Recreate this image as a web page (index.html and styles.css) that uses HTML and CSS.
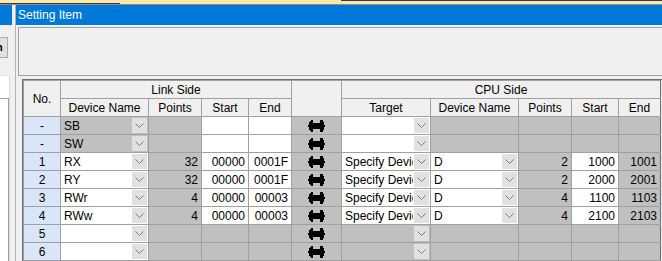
FILE: index.html
```html
<!DOCTYPE html>
<html lang="en">
<head>
    <meta charset="UTF-8">
    <title>Setting Item</title>
    <link rel="stylesheet" href="styles.css">
</head>
<body>
    <svg class="defs" width="0" height="0">
        <symbol id="chev" viewBox="0 0 9 5"><polyline points="0.5,0.5 4.5,4.5 8.5,0.5" fill="none" stroke="#7c7c7c" stroke-width="1"/></symbol>
        <symbol id="dbl" viewBox="0 0 17 12"><polygon points="0,6 2,1 3,0 5,0 5,3 12,3 12,0 14,0 15,1 17,6 15,11 14,12 12,12 12,9 5,9 5,12 3,12 2,11" fill="#000"/></symbol>
    </svg>

    <div class="topbar">
        <div class="tb-left"></div>
        <div class="tb-mid"></div>
        <div class="tb-right"></div>
    </div>

    <div class="workspace">
        <div class="side">
            <div class="side-title"></div>
            <div class="side-btn"><b>n</b></div>
            <div class="side-list"><div class="side-inner"></div></div>
        </div>
        <div class="splitter"></div>

        <div class="main">
            <div class="title">Setting Item</div>
            <div class="content">
                <div class="toolbar"></div>
                <div class="grid-wrap">
                    <table class="grid">
                        <colgroup>
                            <col style="width:37px"><col style="width:88px"><col style="width:53px"><col style="width:47px"><col style="width:43px">
                            <col style="width:50px">
                            <col style="width:89px"><col style="width:88px"><col style="width:53px"><col style="width:47px"><col style="width:42px">
                        </colgroup>
                        <tr>
                            <th rowspan="2">No.</th>
                            <th colspan="4">Link Side</th>
                            <th rowspan="2"></th>
                            <th colspan="5" class="last">CPU Side</th>
                        </tr>
                        <tr>
                            <th>Device Name</th><th>Points</th><th>Start</th><th>End</th>
                            <th>Target</th><th>Device Name</th><th>Points</th><th>Start</th><th class="last">End</th>
                        </tr>

                        <tr>
                            <td class="no">-</td>
                            <td class="combo g"><div class="cb"><span class="cb-text">SB</span><span class="cb-btn"><svg><use href="#chev"/></svg></span></div></td>
                            <td class="g"></td><td class="w"></td><td class="w"></td>
                            <td class="g arrow"><svg><use href="#dbl"/></svg></td>
                            <td class="combo w"><div class="cb"><span class="cb-text"></span><span class="cb-btn"><svg><use href="#chev"/></svg></span></div></td>
                            <td class="g"></td><td class="g"></td><td class="g"></td><td class="g last"></td>
                        </tr>
                        <tr>
                            <td class="no">-</td>
                            <td class="combo g"><div class="cb"><span class="cb-text">SW</span><span class="cb-btn"><svg><use href="#chev"/></svg></span></div></td>
                            <td class="g"></td><td class="w"></td><td class="w"></td>
                            <td class="g arrow"><svg><use href="#dbl"/></svg></td>
                            <td class="combo w"><div class="cb"><span class="cb-text"></span><span class="cb-btn"><svg><use href="#chev"/></svg></span></div></td>
                            <td class="g"></td><td class="g"></td><td class="g"></td><td class="g last"></td>
                        </tr>
                        <tr>
                            <td class="no">1</td>
                            <td class="combo w"><div class="cb"><span class="cb-text">RX</span><span class="cb-btn"><svg><use href="#chev"/></svg></span></div></td>
                            <td class="g num">32</td><td class="w num">00000</td><td class="w num">0001F</td>
                            <td class="g arrow"><svg><use href="#dbl"/></svg></td>
                            <td class="combo w"><div class="cb"><span class="cb-text">Specify Device</span><span class="cb-btn"><svg><use href="#chev"/></svg></span></div></td>
                            <td class="combo w"><div class="cb"><span class="cb-text">D</span><span class="cb-btn"><svg><use href="#chev"/></svg></span></div></td>
                            <td class="g num">2</td><td class="w num">1000</td><td class="g num last">1001</td>
                        </tr>
                        <tr>
                            <td class="no">2</td>
                            <td class="combo w"><div class="cb"><span class="cb-text">RY</span><span class="cb-btn"><svg><use href="#chev"/></svg></span></div></td>
                            <td class="g num">32</td><td class="w num">00000</td><td class="w num">0001F</td>
                            <td class="g arrow"><svg><use href="#dbl"/></svg></td>
                            <td class="combo w"><div class="cb"><span class="cb-text">Specify Device</span><span class="cb-btn"><svg><use href="#chev"/></svg></span></div></td>
                            <td class="combo w"><div class="cb"><span class="cb-text">D</span><span class="cb-btn"><svg><use href="#chev"/></svg></span></div></td>
                            <td class="g num">2</td><td class="w num">2000</td><td class="g num last">2001</td>
                        </tr>
                        <tr>
                            <td class="no">3</td>
                            <td class="combo w"><div class="cb"><span class="cb-text">RWr</span><span class="cb-btn"><svg><use href="#chev"/></svg></span></div></td>
                            <td class="g num">4</td><td class="w num">00000</td><td class="w num">00003</td>
                            <td class="g arrow"><svg><use href="#dbl"/></svg></td>
                            <td class="combo w"><div class="cb"><span class="cb-text">Specify Device</span><span class="cb-btn"><svg><use href="#chev"/></svg></span></div></td>
                            <td class="combo w"><div class="cb"><span class="cb-text">D</span><span class="cb-btn"><svg><use href="#chev"/></svg></span></div></td>
                            <td class="g num">4</td><td class="w num">1100</td><td class="g num last">1103</td>
                        </tr>
                        <tr>
                            <td class="no">4</td>
                            <td class="combo w"><div class="cb"><span class="cb-text">RWw</span><span class="cb-btn"><svg><use href="#chev"/></svg></span></div></td>
                            <td class="g num">4</td><td class="w num">00000</td><td class="w num">00003</td>
                            <td class="g arrow"><svg><use href="#dbl"/></svg></td>
                            <td class="combo w"><div class="cb"><span class="cb-text">Specify Device</span><span class="cb-btn"><svg><use href="#chev"/></svg></span></div></td>
                            <td class="combo w"><div class="cb"><span class="cb-text">D</span><span class="cb-btn"><svg><use href="#chev"/></svg></span></div></td>
                            <td class="g num">4</td><td class="w num">2100</td><td class="g num last">2103</td>
                        </tr>
                        <tr>
                            <td class="no">5</td>
                            <td class="combo w"><div class="cb"><span class="cb-text"></span><span class="cb-btn"><svg><use href="#chev"/></svg></span></div></td>
                            <td class="g"></td><td class="g"></td><td class="g"></td>
                            <td class="g arrow"><svg><use href="#dbl"/></svg></td>
                            <td class="combo g"><div class="cb"><span class="cb-text"></span><span class="cb-btn"><svg><use href="#chev"/></svg></span></div></td>
                            <td class="g"></td><td class="g"></td><td class="g"></td><td class="g last"></td>
                        </tr>
                        <tr>
                            <td class="no">6</td>
                            <td class="combo w"><div class="cb"><span class="cb-text"></span><span class="cb-btn"><svg><use href="#chev"/></svg></span></div></td>
                            <td class="g"></td><td class="g"></td><td class="g"></td>
                            <td class="g arrow"><svg><use href="#dbl"/></svg></td>
                            <td class="combo g"><div class="cb"><span class="cb-text"></span><span class="cb-btn"><svg><use href="#chev"/></svg></span></div></td>
                            <td class="g"></td><td class="g"></td><td class="g"></td><td class="g last"></td>
                        </tr>
                    </table>
                </div>
            </div>
        </div>
    </div>
</body>
</html>
```

FILE: styles.css
```css
* {
    box-sizing: border-box;
}
body {
    margin: 0;
    width: 662px;
    height: 261px;
    overflow: hidden;
    background-color: #f0f0f0;
    font-family: "Liberation Sans", Arial, sans-serif;
    font-size: 12px;
    color: #000;
}
.defs {
    position: absolute;
}
.topbar {
    display: flex;
    height: 5px;
    background-color: #ffe8a4;
    border-bottom: 1px solid #8c8c8c;
}
.tb-left {
    width: 120px;
    border-bottom: 1px solid #2e3b58;
}
.tb-mid {
    width: 221px;
}
.tb-right {
    flex: 1;
    border-top: 1px solid #2e3b58;
}
.workspace {
    display: flex;
    height: 256px;
}
.side {
    width: 12px;
    display: flex;
    flex-direction: column;
}
.side-title {
    height: 20px;
    background-color: #0078d7;
}
.side-btn {
    margin-top: 12px;
    width: 8px;
    height: 21px;
    background-color: #e1e1e1;
    border: 1px solid #adadad;
    border-left: none;
    font-size: 11px;
    line-height: 19px;
    overflow: hidden;
    text-indent: -4px;
}
.side-list {
    margin-top: 17px;
    width: 10px;
    flex: 1;
    background-color: #fff;
    border-top: 1px solid #e3e3e3;
    border-right: 1px solid #d9d9d9;
    padding-top: 22px;
}
.side-inner {
    height: 100%;
    border-top: 1px solid #a0a0a0;
    border-right: 1px solid #a0a0a0;
}
.splitter {
    width: 4px;
    border-right: 1px solid #b4b4b4;
}
.main {
    flex: 1;
    min-width: 0;
}
.title {
    height: 20px;
    line-height: 20px;
    padding-left: 2px;
    background-color: #0078d7;
    color: #fff;
}
.content {
    padding: 2px 0 0 2px;
}
.toolbar {
    height: 49px;
    border: 1px solid #a0a0a0;
    border-right: none;
}
.grid-wrap {
    margin: 3px 0 0 4px;
    border-top: 1px solid #6d6d6d;
    border-left: 1px solid #6d6d6d;
}
.grid {
    border-collapse: collapse;
    table-layout: fixed;
    width: 638px;
}
.grid tr {
    height: 18px;
}
.grid th,
.grid td {
    border: 1px solid #a0a0a0;
    padding: 0 3px;
    height: 18px;
    font-weight: normal;
    white-space: nowrap;
    overflow: hidden;
}
.grid th {
    background-color: #f0f0f0;
    text-align: center;
}
.grid td.no {
    background-color: #d9e6f8;
    text-align: center;
}
.grid td.w {
    background-color: #fff;
}
.grid td.g {
    background-color: #c0c0c0;
}
.grid td.num {
    text-align: right;
}
.grid .last {
    border-right-color: #6d6d6d;
}
.grid td.combo {
    padding: 0;
}
.cb {
    display: flex;
    align-items: center;
    height: 17px;
}
.cb-text {
    flex: 1;
    min-width: 0;
    padding-left: 3px;
    overflow: hidden;
}
.cb-btn {
    display: flex;
    align-items: center;
    justify-content: center;
    width: 15px;
    height: 15px;
    margin: 1px;
    background-color: #e1e1e1;
}
.cb-btn svg {
    width: 9px;
    height: 5px;
}
.grid td.arrow {
    text-align: center;
    padding: 0;
    line-height: 0;
}
.arrow svg {
    width: 17px;
    height: 12px;
    shape-rendering: crispEdges;
}
```
